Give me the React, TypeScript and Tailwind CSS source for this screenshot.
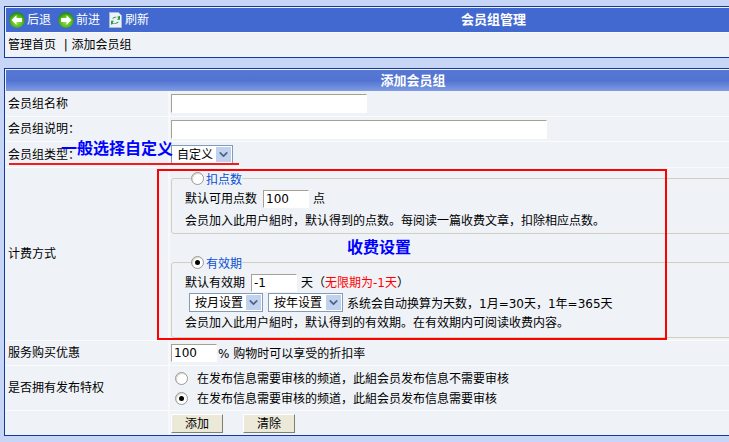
import { ChevronDown } from 'lucide-react';

function ArrowIcon({ dir }: { dir: 'left' | 'right' }) {
  const id = `ball-${dir}`;
  return (
    <svg width="16" height="16" viewBox="0 0 16 16" className="shrink-0">
      <defs>
        <radialGradient id={id} cx="50%" cy="60%" r="60%">
          <stop offset="0%" stopColor="#a8e64a" />
          <stop offset="65%" stopColor="#4fb81a" />
          <stop offset="100%" stopColor="#1f7d10" />
        </radialGradient>
      </defs>
      <circle cx="8" cy="8" r="7.8" fill={`url(#${id})`} />
      {dir === 'left' ? (
        <path d="M2.5 8 L7.5 3 V6 H13 V10 H7.5 V13 Z" fill="#fff" />
      ) : (
        <path d="M13.5 8 L8.5 3 V6 H3 V10 H8.5 V13 Z" fill="#fff" />
      )}
    </svg>
  );
}

function RefreshIcon() {
  return (
    <svg width="13" height="16" viewBox="0 0 13 16" className="shrink-0">
      <path d="M.5 .5 H9.5 L12.5 3.5 V15.5 H.5 Z" fill="#eef3fb" stroke="#a9bcdc" />
      <path d="M3 7 A3.8 3.8 0 0 1 9.4 6 L8 7.8 H11 V3.8 Z" fill="#2f9a3c" />
      <path d="M10 9.5 A3.8 3.8 0 0 1 3.6 10.5 L5 8.8 H2 V12.7 Z" fill="#2f9a3c" />
    </svg>
  );
}

function Select({ label, width }: { label: string; width: string }) {
  return (
    <div className={`flex h-[19px] items-center justify-between border border-[#7f9db9] bg-white pl-[5px] pr-px ${width}`}>
      <span className="text-[12px] leading-none">{label}</span>
      <span className="flex h-[15px] w-[15px] items-center justify-center bg-[#c1d2ee]">
        <ChevronDown size={13} strokeWidth={3} className="text-[#4d6185]" />
      </span>
    </div>
  );
}

function Radio({ checked }: { checked?: boolean }) {
  return (
    <span className="flex h-[13px] w-[13px] shrink-0 items-center justify-center rounded-full border border-[#9a9a90] bg-white shadow-[inset_1px_1px_0_#d8d8d0]">
      {checked && <span className="h-[5px] w-[5px] rounded-full bg-black" />}
    </span>
  );
}

function TextBox({ value, className }: { value?: string; className: string }) {
  return (
    <input
      readOnly
      value={value ?? ''}
      className={`border border-t-[#a5a294] border-l-[#a5a294] border-r-white border-b-white bg-white pl-[2px] text-[12px] text-black outline-none ${className}`}
    />
  );
}

function Row({ label, h, children }: { label?: string; h: string; children: React.ReactNode }) {
  return (
    <div className={`flex border-t border-[#f9fbfd] ${h}`}>
      <div className="flex w-[162px] shrink-0 items-center pl-[2px]">{label}</div>
      <div className="flex flex-1 items-center border-l-2 border-[#f6f8fb] pl-px">{children}</div>
    </div>
  );
}

function FieldSet({ legend, checked, h, children }: { legend: string; checked?: boolean; h: string; children: React.ReactNode }) {
  return (
    <fieldset className={`rounded-[3px] border border-[#d0d0bf] pl-[13px] ${h}`}>
      <legend className="ml-[6px] flex h-[16px] items-center gap-[2px] text-[#0a4fcf]">
        <Radio checked={checked} />
        <span className="pt-[4px]">{legend}</span>
      </legend>
      {children}
    </fieldset>
  );
}

export default function App() {
  return (
    <div className="h-[442px] w-[729px] overflow-hidden bg-[#c7d5f6] pl-1 pt-[6px] font-['DejaVu_Sans','Noto_Sans_CJK_SC',sans-serif] text-[12px] leading-[18px] text-black">
      {/* 顶部工具栏 */}
      <div className="w-[817px] border border-[#123b9b] bg-[#eff3f7] pl-px pt-px">
        <div className="flex h-[24px] items-center bg-[#4169cf] pl-[3px] text-white">
          <span className="flex items-center gap-[2px]"><ArrowIcon dir="left" />后退</span>
          <span className="ml-[7px] flex items-center gap-[2px]"><ArrowIcon dir="right" />前进</span>
          <span className="ml-[9px] flex items-center gap-[3px]"><RefreshIcon />刷新</span>
          <span className="ml-[312px] text-[13px] font-bold">会员组管理</span>
        </div>
        <div className="flex h-[25px] items-center border-t border-[#f9fbfd] pl-[2px] whitespace-pre">管理首页  | 添加会员组</div>
      </div>

      {/* 表单 */}
      <div className="relative mt-[10px] w-[817px] border border-[#123b9b] bg-[#eff3f7] pl-px pt-px">
        <div className="flex h-[21px] items-center justify-center bg-gradient-to-b from-[#5877d3] via-[#5273d2] to-[#7f9be3] text-[13px] font-bold text-white">
          添加会员组
        </div>
        <div className="flex h-[25px]">
          <div className="flex w-[162px] shrink-0 items-center pl-[2px]">会员组名称</div>
          <div className="flex flex-1 items-center border-l-2 border-[#f6f8fb] pl-px">
            <TextBox className="h-[19px] w-[196px]" />
          </div>
        </div>
        <Row label="会员组说明：" h="h-[25px]">
          <TextBox className="h-[19px] w-[376px]" />
        </Row>
        <Row label="会员组类型：" h="h-[26px]">
          <Select label="自定义" width="w-[62px]" />
        </Row>
        <Row label="计费方式" h="h-[173px]">
          <div className="flex h-full w-full flex-col pt-[2px]">
            <FieldSet legend="扣点数" h="h-[64px]">
              <div className="mt-[4px] flex h-[18px] items-center">
                默认可用点数
                <TextBox value="100" className="ml-[6px] mr-[4px] h-[18px] w-[46px]" />
                点
              </div>
              <div className="mt-[4px]">会员加入此用户組时，默认得到的点数。每阅读一篇收费文章，扣除相应点数。</div>
            </FieldSet>
            <FieldSet legend="有效期" checked h="mt-[20px] h-[84px]">
              <div className="mt-[4px] flex h-[18px] items-center">
                默认有效期
                <TextBox value="-1" className="ml-[6px] mr-[4px] h-[18px] w-[46px]" />
                天（<span className="text-[#ff0000]">无限期为-1天</span>）
              </div>
              <div className="mt-px flex h-[19px] items-center">
                <Select label="按月设置" width="ml-[4px] w-[74px]" />
                <Select label="按年设置" width="ml-[5px] w-[75px]" />
                <span className="ml-[4px] pt-[3px]">系统会自动换算为天数，1月=30天，1年=365天</span>
              </div>
              <div className="pt-[2px]">会员加入此用户組时，默认得到的有效期。在有效期内可阅读收费内容。</div>
            </FieldSet>
          </div>
        </Row>
        <Row label="服务购买优惠" h="h-[25px]">
          <TextBox value="100" className="mr-px h-[18px] w-[46px]" />
          <span className="pt-[2px]">% 购物时可以享受的折扣率</span>
        </Row>
        <Row label="是否拥有发布特权" h="h-[45px]">
          <div className="flex flex-col gap-[2px] pl-[4px]">
            <div className="flex h-[18px] items-center gap-[9px]">
              <Radio />
              <span className="pt-[2px]">在发布信息需要审核的频道，此組会员发布信息不需要审核</span>
            </div>
            <div className="flex h-[18px] items-center gap-[9px]">
              <Radio checked />
              <span className="pt-[2px]">在发布信息需要审核的频道，此組会员发布信息需要审核</span>
            </div>
          </div>
        </Row>
        <Row h="h-[25px]">
          <button className="h-[19px] w-[52px] border border-t-white border-l-white border-r-[#7f7f78] border-b-[#7f7f78] bg-[#ece9d8]">添加</button>
          <button className="ml-[20px] h-[19px] w-[52px] border border-t-white border-l-white border-r-[#7f7f78] border-b-[#7f7f78] bg-[#ece9d8]">清除</button>
        </Row>

        {/* 标注 */}
        <div className="absolute left-[4px] top-[94px] h-[2px] w-[230px] bg-[#ee1c1c]" />
        <div className="absolute left-[56px] top-[70px] text-[16px] leading-[20px] font-bold text-[#0000ff]">一般选择自定义</div>
        <div className="absolute left-[152px] top-[100px] h-[171px] w-[510px] border-2 border-[#ff0000]" />
        <div className="absolute left-[342px] top-[169px] text-[16px] leading-[20px] font-bold text-[#0000ff]">收费设置</div>
      </div>
    </div>
  );
}
